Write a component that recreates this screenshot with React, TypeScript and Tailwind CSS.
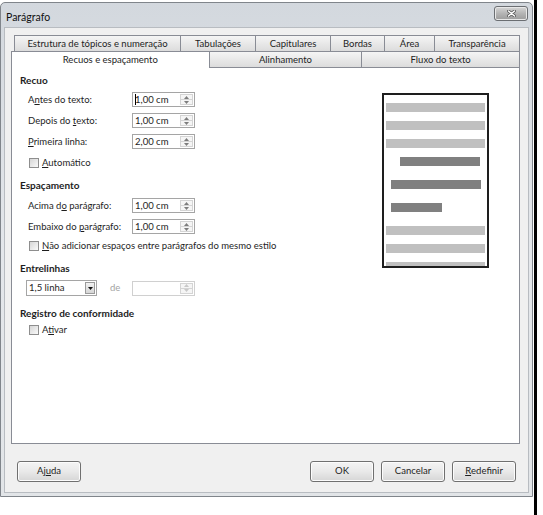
import React from 'react';

type SpinProps = { value?: string; cursor?: boolean; disabled?: boolean };

function Arrow({ up, color }: { up?: boolean; color: string }) {
  return (
    <svg width="5" height="3" viewBox="0 0 5 3">
      <path d={up ? 'M0 3 L2.5 0 L5 3 Z' : 'M0 0 L2.5 3 L5 0 Z'} fill={color} />
    </svg>
  );
}

// numeric field with the little up/down buttons
function Spin({ value, cursor, disabled }: SpinProps) {
  const arrow = disabled ? '#c8c8c8' : '#7d7d7d';
  return (
    <div
      className={`flex h-[15px] w-[63px] border bg-white ${
        disabled ? 'border-[#d0d0d0]' : 'border-[#a5a5a5]'
      }`}
    >
      <div className="relative flex-1 pl-[2px] leading-[13px]">
        {cursor && <span className="absolute left-[2px] top-[1px] h-[11px] w-px bg-black" />}
        {value}
      </div>
      <div className="my-[1px] mr-[1px] flex w-[13px] flex-col border border-[#d4d4d4] bg-[#f5f5f5]">
        <div className="flex flex-1 items-center justify-center border-b border-[#d4d4d4]">
          <Arrow up color={arrow} />
        </div>
        <div className="flex flex-1 items-center justify-center">
          <Arrow color={arrow} />
        </div>
      </div>
    </div>
  );
}

function Check({ children }: { children: React.ReactNode }) {
  return (
    <div className="ml-[9px] flex h-[14px] items-center leading-[14px]">
      <span className="mr-[3px] h-[10px] w-[10px] border border-[#8e8e8e] bg-linear-to-br from-[#d6d6d6] to-[#fafafa]" />
      <span>{children}</span>
    </div>
  );
}

function Field({ label, value, cursor }: { label: React.ReactNode; value: string; cursor?: boolean }) {
  return (
    <div className="ml-[8px] flex h-[15px] items-center">
      <span className="w-[104px] leading-[14px]">{label}</span>
      <Spin value={value} cursor={cursor} />
    </div>
  );
}

function Heading({ children }: { children: React.ReactNode }) {
  return <div className="h-[14px] text-[10px] font-bold leading-[14px]">{children}</div>;
}

function Button({ children, className = '' }: { children: React.ReactNode; className?: string }) {
  return (
    <div
      className={`flex h-[21px] w-[64px] items-center justify-center rounded-[3px] border border-[#707070] bg-linear-to-b from-[#f4f4f4] via-[#e9e9e9] to-[#d6d6d6] shadow-[inset_0_0_0_1px_#fcfcfc] ${className}`}
    >
      {children}
    </div>
  );
}

const topTabs = [
  { label: 'Estrutura de tópicos e numeração', w: 'w-[167px]' },
  { label: 'Tabulações', w: 'w-[76px]' },
  { label: 'Capitulares', w: 'w-[76px]' },
  { label: 'Bordas', w: 'w-[55px]' },
  { label: 'Área', w: 'w-[51px]' },
  { label: 'Transparência', w: 'w-[86px]' },
];

const u = 'underline decoration-1 underline-offset-[1px]';

function Preview() {
  const light = 'h-[9px] bg-[#c0c0c0]';
  const dark = 'h-[9px] bg-[#808080]';
  return (
    <div className="mr-[30px] mt-[25px] h-[175px] w-[107px] overflow-hidden border-2 border-[#1e1e1e] bg-white pt-[8px]">
      <div className={`ml-[2px] w-[99px] ${light}`} />
      <div className={`ml-[2px] mt-[9px] w-[99px] ${light}`} />
      <div className={`ml-[2px] mt-[9px] w-[99px] ${light}`} />
      <div className={`ml-[16px] mt-[9px] w-[80px] ${dark}`} />
      <div className={`ml-[7px] mt-[14px] w-[90px] ${dark}`} />
      <div className={`ml-[7px] mt-[14px] w-[51px] ${dark}`} />
      <div className={`ml-[2px] mt-[14px] w-[99px] ${light}`} />
      <div className={`ml-[2px] mt-[9px] w-[99px] ${light}`} />
      <div className={`ml-[2px] mt-[9px] w-[99px] ${light}`} />
    </div>
  );
}

export default function App() {
  return (
    <div className="flex h-[515px] w-[543px] bg-white font-['Lato',sans-serif] text-[9.5px] text-[#1e1e1e]">
      {/* dialog window */}
      <div className="mt-[2px] flex h-[495px] w-[533px] flex-col rounded-t-[5px] border border-[#80858b] bg-linear-to-b from-[#d3d8de] via-[#e4e7eb] to-[#e2e5e8] px-[3px] pb-[3px]">
        <div className="flex h-[24px] items-start">
          <span className="ml-[2px] mt-[7px] text-[10.5px] leading-[14px] text-[#111]">Parágrafo</span>
          <div className="ml-auto mr-[1px] mt-[3px] flex h-[15px] w-[34px] items-center justify-center rounded-[3px] border border-[#6b6e72] bg-linear-to-b from-[#d6d6d6] via-[#b4b4b4] to-[#9c9c9c] shadow-[inset_0_0_0_1px_#e8e8e8]">
            <svg width="9" height="7" viewBox="0 0 9 7">
              <path d="M1.5 1 L7.5 6 M7.5 1 L1.5 6" stroke="#555" strokeWidth="3" strokeLinecap="round" />
              <path d="M1.5 1 L7.5 6 M7.5 1 L1.5 6" stroke="#fff" strokeWidth="1.6" strokeLinecap="round" />
            </svg>
          </div>
        </div>

        {/* client area */}
        <div className="flex flex-1 flex-col border border-[#b8bcc1] bg-[#f0f0f0] pl-[6px] pr-[8px] pt-[7px]">
          <div className="ml-[3px] flex h-[16px]">
            {topTabs.map((t, i) => (
              <div
                key={t.label}
                className={`${t.w} ${
                  i > 0 ? '-ml-px' : ''
                } flex items-center justify-center border border-b-0 border-[#898c95] bg-linear-to-b from-[#f5f5f5] to-[#dcdcdc] leading-[14px]`}
              >
                {t.label}
              </div>
            ))}
          </div>
          <div className="flex h-[16px] items-end">
            <div className="relative z-10 -mb-px flex h-[17px] w-[199px] items-center justify-center border border-b-0 border-[#898c95] bg-white leading-[14px]">
              Recuos e espaçamento
            </div>
            <div className="-ml-px flex h-[16px] w-[154px] items-center justify-center border border-b-0 border-[#898c95] bg-linear-to-b from-[#f5f5f5] to-[#dcdcdc] leading-[14px]">
              Alinhamento
            </div>
            <div className="-ml-px flex h-[16px] w-[159px] items-center justify-center border border-b-0 border-[#898c95] bg-linear-to-b from-[#f5f5f5] to-[#dcdcdc] leading-[14px]">
              Fluxo do texto
            </div>
          </div>

          {/* page contents */}
          <div className="flex h-[377px] border border-[#898c95] bg-white">
            <div className="flex flex-col pl-[8px] pt-[5px]">
              <Heading>Recuo</Heading>
              <div className="mt-[5px] flex flex-col gap-[6px]">
                <Field label={<>A<span className={u}>n</span>tes do texto:</>} value="1,00 cm" cursor />
                <Field label={<>Depois do <span className={u}>t</span>exto:</>} value="1,00 cm" />
                <Field label={<><span className={u}>P</span>rimeira linha:</>} value="2,00 cm" />
              </div>
              <div className="mt-[7px]">
                <Check>
                  <span className={u}>A</span>utomático
                </Check>
              </div>

              <div className="mt-[8px]">
                <Heading>Espaçamento</Heading>
              </div>
              <div className="mt-[6px] flex flex-col gap-[6px]">
                <Field label={<>Acima d<span className={u}>o</span> parágrafo:</>} value="1,00 cm" />
                <Field label={<>Embaixo do <span className={u}>p</span>arágrafo:</>} value="1,00 cm" />
              </div>
              <div className="mt-[5px]">
                <Check>
                  <span className={u}>N</span>ão adicionar espaços entre parágrafos do mesmo estilo
                </Check>
              </div>

              <div className="mt-[8px]">
                <Heading>Entrelinhas</Heading>
              </div>
              <div className="ml-[6px] mt-[5px] flex items-center">
                <div className="flex h-[16px] w-[71px] border border-[#a5a5a5] bg-white">
                  <span className="flex-1 pl-[2px] leading-[14px]">1,5 linha</span>
                  <div className="m-px flex w-[10px] items-center justify-center border border-[#9a9a9a] bg-linear-to-b from-[#f2f2f2] to-[#d6d6d6]">
                    <svg width="5" height="3" viewBox="0 0 5 3">
                      <path d="M0 0 L2.5 3 L5 0 Z" fill="#111" />
                    </svg>
                  </div>
                </div>
                <span className="w-[35px] pl-[13px] text-[#a3a3a3]">de</span>
                <Spin disabled />
              </div>

              <div className="mt-[10px]">
                <Heading>Registro de conformidade</Heading>
              </div>
              <div className="mt-[3px]">
                <Check>
                  A<span className={u}>t</span>ivar
                </Check>
              </div>
            </div>

            <div className="ml-auto">
              <Preview />
            </div>
          </div>

          {/* dialog buttons */}
          <div className="mt-[17px] flex pl-[6px] pr-[4px]">
            <Button>
              Aj<span className={u}>u</span>da
            </Button>
            <div className="ml-auto flex gap-[7px]">
              <Button>OK</Button>
              <Button>Cancelar</Button>
              <Button>
                <span className={u}>R</span>edefinir
              </Button>
            </div>
          </div>
        </div>
      </div>

      {/* dark edge beside the window */}
      <div className="ml-px h-[515px] w-[3px] bg-black" />
    </div>
  );
}
